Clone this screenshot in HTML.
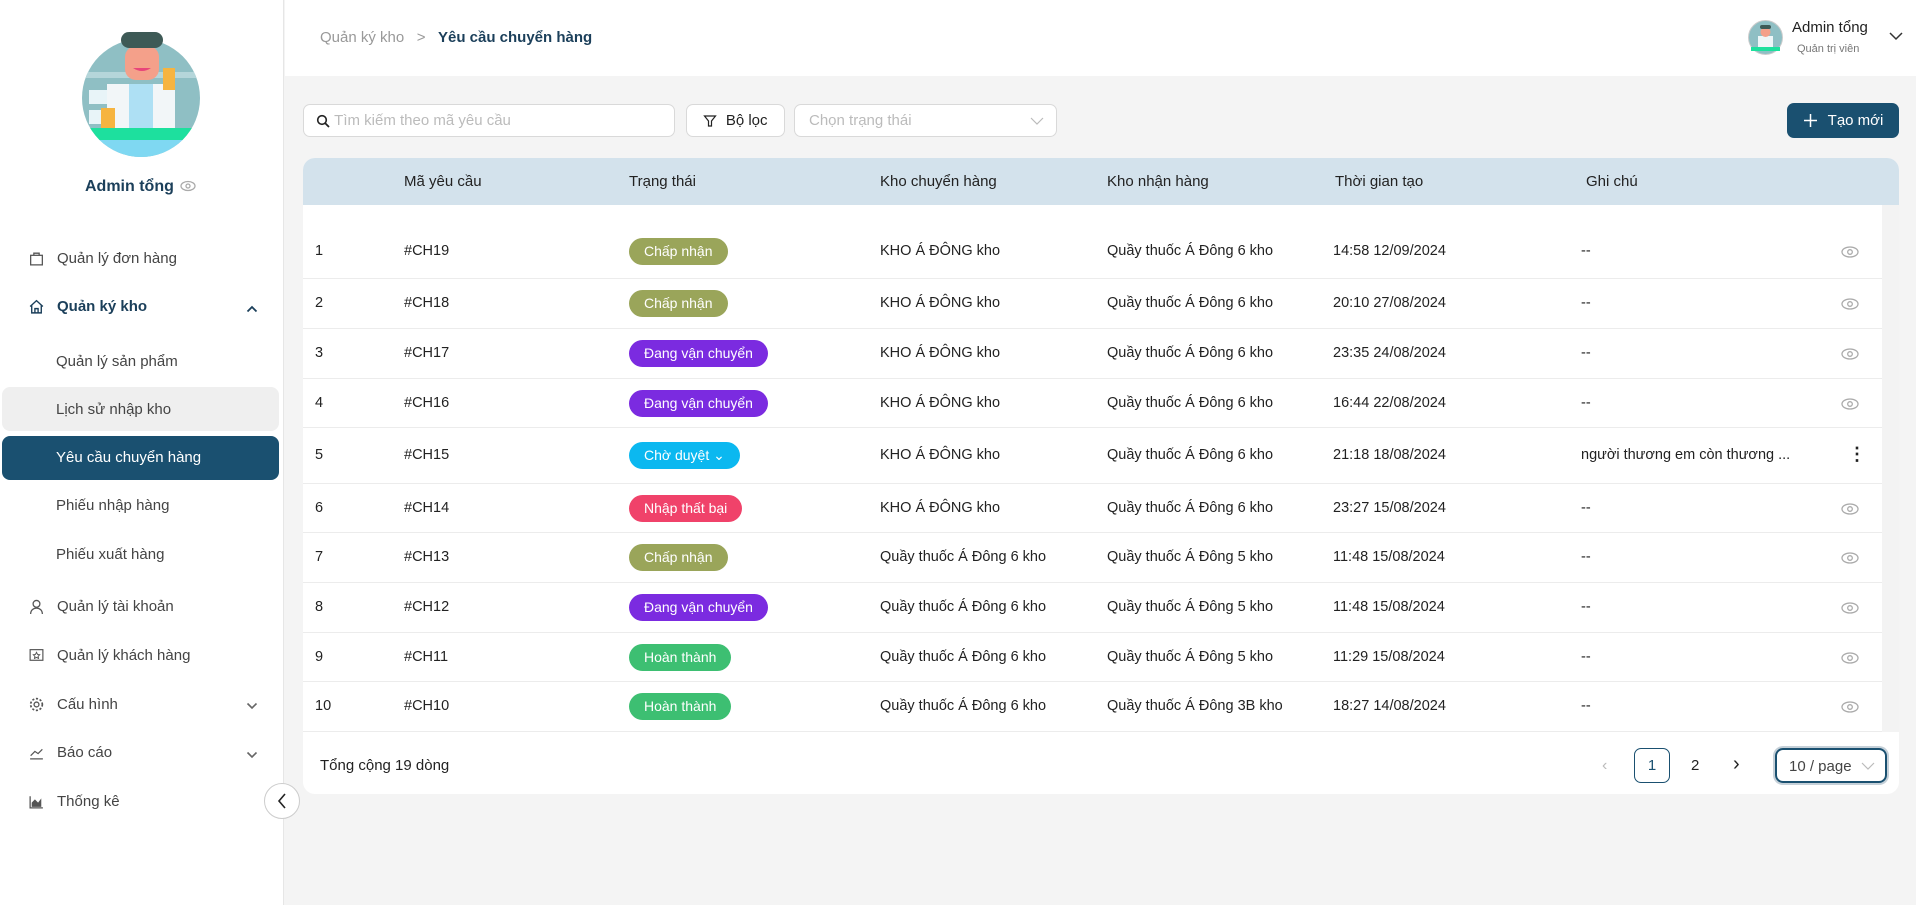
<!DOCTYPE html>
<html><head><meta charset="utf-8"><style>
*{box-sizing:border-box;margin:0;padding:0}
body{width:1916px;height:905px;overflow:hidden;font-family:"Liberation Sans",sans-serif;background:#f4f4f4;color:#222;position:relative}
.abs{position:absolute}
#side{left:0;top:0;width:284px;height:905px;background:#fff;border-right:1px solid #e6e6e6}
.mi{position:absolute;left:28px;font-size:15px;color:#444;display:flex;align-items:center;gap:12px}
.mi svg{width:17px;height:17px}
.sub{position:absolute;left:56px;font-size:15px;color:#444}
#top{left:285px;top:0;width:1631px;height:76px;background:#fff}
.inp{position:absolute;background:#fff;border:1px solid #d9d9d9;border-radius:7px;font-size:15px;color:#bbb;display:flex;align-items:center}
#card{left:303px;top:158px;width:1596px;height:636px;background:#fff;border-radius:12px;overflow:hidden}
#thead{position:absolute;left:0;top:0;width:1596px;height:47px;background:#d3e2ec}
.th{position:absolute;top:15px;font-size:15px;color:#222}
.row{position:absolute;left:0;width:1579px;border-bottom:1px solid #ececec;font-size:14.5px;color:#222}
.row span{position:absolute}
.b{position:absolute;height:27px;line-height:27px;border-radius:14px;color:#fff;font-size:14px;padding:0 15px}
.eye{position:absolute;left:1538px;width:18px;height:12px}
</style></head><body>
<div id="side" class="abs">
 <svg class="abs" style="left:81px;top:32px" width="120" height="128" viewBox="0 0 120 128">
  <defs><clipPath id="c"><circle cx="60" cy="66" r="59"/></clipPath></defs>
  <g clip-path="url(#c)">
   <rect width="120" height="128" fill="#8fbfc4"/>
   <rect x="0" y="40" width="120" height="6" fill="#b5d6da"/>
   <rect x="8" y="58" width="22" height="14" fill="#e8f4f8"/>
   <rect x="8" y="78" width="22" height="14" fill="#e8f4f8"/>
   <rect x="26" y="52" width="68" height="60" fill="#f2f6f8"/>
   <rect x="48" y="52" width="24" height="50" fill="#aee0f4"/>
   <rect x="0" y="96" width="120" height="12" fill="#1de09e"/>
   <rect x="0" y="108" width="120" height="22" fill="#7fd8f2"/>
   <rect x="20" y="76" width="14" height="20" fill="#f6b440"/>
   <rect x="82" y="36" width="12" height="22" fill="#f6b440"/>
  </g>
  <rect x="44" y="14" width="34" height="34" rx="11" fill="#f4a08a"/>
  <rect x="40" y="0" width="42" height="16" rx="8" fill="#3e5a56"/>
  <path d="M52 36q9 6 18 0" fill="#e8457a"/>
 </svg>
 <div class="abs" style="left:85px;top:178px;font-size:16px;font-weight:bold;color:#1b3f5a">Admin tổng</div>
 <svg class="abs" style="left:180px;top:180px" width="16" height="12" viewBox="0 0 16 12"><ellipse cx="8" cy="6" rx="7" ry="4.5" fill="none" stroke="#aaa" stroke-width="1.3"/><circle cx="8" cy="6" r="2" fill="none" stroke="#aaa" stroke-width="1.3"/></svg>
 <div class="mi" style="top:250px"><svg viewBox="0 0 16 16"><rect x="2.5" y="5" width="11" height="9" fill="none" stroke="#555" stroke-width="1.2"/><path d="M5.5 5V3h5v2" fill="none" stroke="#555" stroke-width="1.2"/></svg>Quản lý đơn hàng</div>
 <div class="mi" style="top:298px;font-weight:bold;color:#1b3f5a"><svg viewBox="0 0 16 16"><path d="M2 8L8 2.5 14 8M3.5 7v7h9V7M6.5 14v-4h3v4" fill="none" stroke="#1b3f5a" stroke-width="1.3"/></svg>Quản ký kho</div>
 <svg class="abs" style="left:246px;top:305px" width="12" height="8" viewBox="0 0 12 8"><path d="M1.5 6.5L6 2l4.5 4.5" fill="none" stroke="#1b3f5a" stroke-width="1.8"/></svg>
 <div class="sub" style="top:353px">Quản lý sản phẩm</div>
 <div class="abs" style="left:2px;top:387px;width:277px;height:44px;background:#efefef;border-radius:8px"></div>
 <div class="sub" style="top:401px">Lịch sử nhập kho</div>
 <div class="abs" style="left:2px;top:436px;width:277px;height:44px;background:#1a5070;border-radius:8px"></div>
 <div class="sub" style="top:449px;color:#fff">Yêu cầu chuyển hàng</div>
 <div class="sub" style="top:497px">Phiếu nhập hàng</div>
 <div class="sub" style="top:546px">Phiếu xuất hàng</div>
 <div class="mi" style="top:598px"><svg viewBox="0 0 16 16"><circle cx="8" cy="5.5" r="3.2" fill="none" stroke="#555" stroke-width="1.2"/><path d="M2.5 15c0-3.5 2.5-5.5 5.5-5.5s5.5 2 5.5 5.5" fill="none" stroke="#555" stroke-width="1.2"/></svg>Quản lý tài khoản</div>
 <div class="mi" style="top:647px"><svg viewBox="0 0 16 16"><rect x="2" y="2.5" width="12" height="10" fill="none" stroke="#555" stroke-width="1.1"/><path d="M8 5l1 2 2 .3-1.5 1.4.4 2L8 9.8 6.1 10.7l.4-2L5 7.3 7 7z" fill="none" stroke="#555" stroke-width=".9"/></svg>Quản lý khách hàng</div>
 <div class="mi" style="top:696px"><svg viewBox="0 0 16 16"><circle cx="8" cy="8" r="2.3" fill="none" stroke="#555" stroke-width="1.2"/><circle cx="8" cy="8" r="5.5" fill="none" stroke="#555" stroke-width="1.6" stroke-dasharray="2 1.6"/></svg>Cấu hình</div>
 <div class="mi" style="top:744px"><svg viewBox="0 0 16 16"><path d="M2 14h12M2.5 11l4-4 3 2 4-4" fill="none" stroke="#555" stroke-width="1.1"/></svg>Báo cáo</div>
 <div class="mi" style="top:793px"><svg viewBox="0 0 16 16"><path d="M2 3v11h12" fill="none" stroke="#555" stroke-width="1.2"/><path d="M3.5 13V9l3-3 3 3 3-4v8z" fill="#555"/></svg>Thống kê</div>
 <svg class="abs" style="left:246px;top:702px" width="12" height="8" viewBox="0 0 12 8"><path d="M1.5 1.5L6 6l4.5-4.5" fill="none" stroke="#666" stroke-width="1.6"/></svg>
 <svg class="abs" style="left:246px;top:751px" width="12" height="8" viewBox="0 0 12 8"><path d="M1.5 1.5L6 6l4.5-4.5" fill="none" stroke="#666" stroke-width="1.6"/></svg>
</div>
<div class="abs" style="left:264px;top:783px;width:36px;height:36px;border-radius:50%;background:#fff;border:1px solid #ccc"></div>
<svg class="abs" style="left:276px;top:792px" width="12" height="18" viewBox="0 0 12 18"><path d="M9 2L3 9l6 7" fill="none" stroke="#222" stroke-width="1.6"/></svg>

<div id="top" class="abs"></div>
<div class="abs" style="left:320px;top:29px;font-size:15px;color:#999">Quản ký kho &nbsp;&nbsp;&gt;&nbsp;&nbsp; <b style="color:#1b3f5a">Yêu cầu chuyển hàng</b></div>
<svg class="abs" style="left:1748px;top:20px" width="35" height="35" viewBox="0 0 35 35"><circle cx="17.5" cy="17.5" r="17" fill="#8fbfc4" stroke="#ccc"/><rect x="10" y="16" width="15" height="14" fill="#eef6f8"/><circle cx="17.5" cy="12" r="5" fill="#f4a08a"/><rect x="12" y="5" width="11" height="4" rx="2" fill="#3e5a56"/><rect x="3" y="27" width="29" height="4" fill="#1de09e"/></svg>
<div class="abs" style="left:1792px;top:19px;font-size:15px;color:#222">Admin tổng</div>
<div class="abs" style="left:1797px;top:43px;font-size:11px;color:#777">Quản trị viên</div>
<svg class="abs" style="left:1889px;top:32px" width="14" height="9" viewBox="0 0 14 9"><path d="M1 1l6 6 6-6" fill="none" stroke="#333" stroke-width="1.5"/></svg>

<div class="inp" style="left:303px;top:104px;width:372px;height:33px;padding-left:12px"><svg width="14" height="14" viewBox="0 0 14 14"><circle cx="6" cy="6" r="4.3" fill="none" stroke="#222" stroke-width="1.6"/><path d="M9 9l4 4" stroke="#222" stroke-width="1.8"/></svg>&nbsp;Tìm kiếm theo mã yêu cầu</div>
<div class="inp" style="left:686px;top:104px;width:99px;height:33px;color:#222;justify-content:center"><svg width="14" height="14" viewBox="0 0 14 14"><path d="M1.5 2h11L8.5 7v5h-3V7z" fill="none" stroke="#222" stroke-width="1.2"/></svg>&nbsp;&nbsp;Bộ lọc</div>
<div class="inp" style="left:794px;top:104px;width:263px;height:33px;padding-left:14px">Chọn trạng thái<svg style="position:absolute;right:12px;top:12px" width="14" height="9" viewBox="0 0 14 9"><path d="M1 1l6 6 6-6" fill="none" stroke="#bbb" stroke-width="1.2"/></svg></div>
<div class="abs" style="left:1787px;top:103px;width:112px;height:35px;background:#1a5070;border-radius:7px;color:#fff;font-size:15px;display:flex;align-items:center;justify-content:center;gap:10px"><svg width="15" height="15" viewBox="0 0 15 15"><path d="M7.5 1v13M1 7.5h13" stroke="#fff" stroke-width="1.5"/></svg>Tạo mới</div>

<div id="card" class="abs">
 <div id="thead">
  <div class="th" style="left:101px">Mã yêu cầu</div>
  <div class="th" style="left:326px">Trạng thái</div>
  <div class="th" style="left:577px">Kho chuyển hàng</div>
  <div class="th" style="left:804px">Kho nhận hàng</div>
  <div class="th" style="left:1032px">Thời gian tạo</div>
  <div class="th" style="left:1283px">Ghi chú</div>
 </div>
 <div class="abs" style="left:1579px;top:47px;width:17px;height:527px;background:#f3f3f3"></div>
</div>
<div id="rows" class="abs" style="left:303px;top:158px"></div>
<div class="abs" style="left:320px;top:757px;font-size:15px;color:#222">Tổng cộng 19 dòng</div>
<div class="abs" style="left:1602px;top:757px;font-size:16px;color:#bbb">&lsaquo;</div>
<div class="abs" style="left:1634px;top:748px;width:36px;height:35px;border:1px solid #1a5070;border-radius:7px;text-align:center;line-height:33px;font-size:15px;color:#1a5070">1</div>
<div class="abs" style="left:1691px;top:757px;font-size:15px;color:#222">2</div>
<div class="abs" style="left:1733px;top:753px;font-size:20px;color:#222">&rsaquo;</div>
<div class="abs" style="left:1775px;top:748px;width:112px;height:35px;border:2px solid #1a5070;border-radius:8px;box-shadow:0 0 0 2px #c5d0d8;font-size:15px;color:#444;padding:8px 0 0 12px">10 / page<svg style="position:absolute;right:10px;top:12px" width="14" height="9" viewBox="0 0 14 9"><path d="M1 1l6 6 6-6" fill="none" stroke="#bbb" stroke-width="1.2"/></svg></div>

<script>
const data=[
["1","#CH19","Chấp nhận","#9aa55a","KHO Á ĐÔNG kho","Quầy thuốc Á Đông 6 kho","14:58 12/09/2024","--"],
["2","#CH18","Chấp nhận","#9aa55a","KHO Á ĐÔNG kho","Quầy thuốc Á Đông 6 kho","20:10 27/08/2024","--"],
["3","#CH17","Đang vận chuyển","#7b2be0","KHO Á ĐÔNG kho","Quầy thuốc Á Đông 6 kho","23:35 24/08/2024","--"],
["4","#CH16","Đang vận chuyển","#7b2be0","KHO Á ĐÔNG kho","Quầy thuốc Á Đông 6 kho","16:44 22/08/2024","--"],
["5","#CH15","Chờ duyệt &#8964;","#0bb8f0","KHO Á ĐÔNG kho","Quầy thuốc Á Đông 6 kho","21:18 18/08/2024","người thương em còn thương ..."],
["6","#CH14","Nhập thất bại","#f0426a","KHO Á ĐÔNG kho","Quầy thuốc Á Đông 6 kho","23:27 15/08/2024","--"],
["7","#CH13","Chấp nhận","#9aa55a","Quầy thuốc Á Đông 6 kho","Quầy thuốc Á Đông 5 kho","11:48 15/08/2024","--"],
["8","#CH12","Đang vận chuyển","#7b2be0","Quầy thuốc Á Đông 6 kho","Quầy thuốc Á Đông 5 kho","11:48 15/08/2024","--"],
["9","#CH11","Hoàn thành","#3dbf72","Quầy thuốc Á Đông 6 kho","Quầy thuốc Á Đông 5 kho","11:29 15/08/2024","--"],
["10","#CH10","Hoàn thành","#3dbf72","Quầy thuốc Á Đông 6 kho","Quầy thuốc Á Đông 3B kho","18:27 14/08/2024","--"]];
const bounds=[205,279,329,379,428,484,533,583,633,682,732];
let h='';
data.forEach((d,i)=>{const t=bounds[i]-158,hh=bounds[i+1]-bounds[i],c=(i==0?47:hh/2);
const y=c-9;
h+=`<div class="row" style="top:${t}px;height:${hh}px">
<span style="left:12px;top:${y}px">${d[0]}</span><span style="left:101px;top:${y}px">${d[1]}</span>
<div class="b" style="left:326px;top:${c-14}px;background:${d[3]}">${d[2]}</div>
<span style="left:577px;top:${y}px">${d[4]}</span><span style="left:804px;top:${y}px">${d[5]}</span>
<span style="left:1030px;top:${y}px">${d[6]}</span><span style="left:1278px;top:${y}px">${d[7]}</span>
${i==4?`<span style="left:1545px;top:${y-3}px;font-size:18px;font-weight:bold">&#8942;</span>`:`<svg class="eye" style="top:${c-6}px" viewBox="0 0 18 12"><ellipse cx="9" cy="6" rx="8" ry="5" fill="none" stroke="#aaa" stroke-width="1.3"/><circle cx="9" cy="6" r="2.3" fill="none" stroke="#aaa" stroke-width="1.3"/></svg>`}
</div>`});
document.getElementById('rows').innerHTML=h;
</script>
</body></html>
